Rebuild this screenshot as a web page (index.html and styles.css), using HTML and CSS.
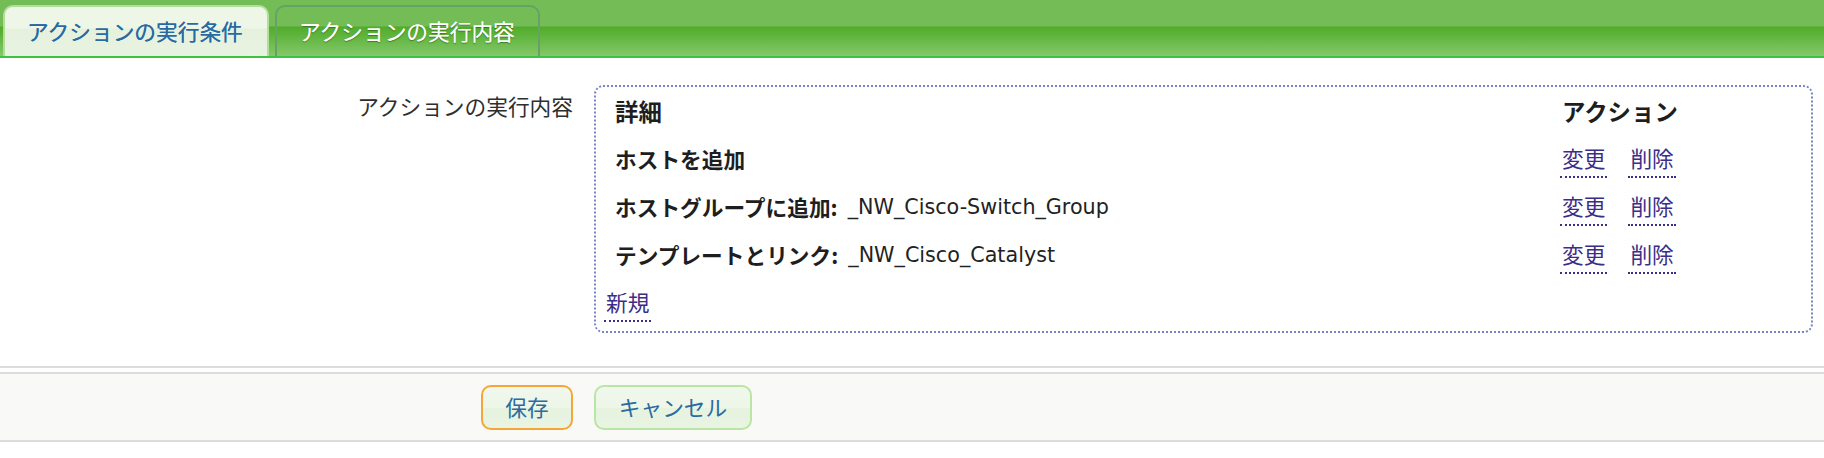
FILE: index.html
```html
<!DOCTYPE html>
<html lang="ja">
<head>
<meta charset="utf-8">
<title>アクション</title>
<link rel="stylesheet" href="styles.css">
</head>
<body>
<div class="tabs-bar">
  <div class="tab tab-active">アクションの実行条件</div>
  <div class="tab tab-inactive">アクションの実行内容</div>
</div>

<div class="form-row">
  <div class="label">アクションの実行内容</div>
  <div class="box">
    <div class="ops">
      <div class="cell detail head">詳細</div>
      <div class="cell act head">アクション</div>

      <div class="cell detail"><b>ホストを追加</b></div>
      <div class="cell act"><a class="link">変更</a><a class="link">削除</a></div>

      <div class="cell detail"><b>ホストグループに追加:</b><span class="name">_NW_Cisco-Switch_Group</span></div>
      <div class="cell act"><a class="link">変更</a><a class="link">削除</a></div>

      <div class="cell detail"><b>テンプレートとリンク:</b><span class="name">_NW_Cisco_Catalyst</span></div>
      <div class="cell act"><a class="link">変更</a><a class="link">削除</a></div>
    </div>
    <div class="new-row"><a class="link">新規</a></div>
  </div>
</div>

<div class="footer">
  <div class="footer-inner">
    <div class="btn-cell-left"><button class="btn btn-save">保存</button></div>
    <div class="btn-cell-right"><button class="btn btn-cancel">キャンセル</button></div>
  </div>
</div>
</body>
</html>
```

FILE: styles.css
```css
* { box-sizing: border-box; }

body {
  margin: 0;
  background: #ffffff;
  font-family: "DejaVu Sans", "Noto Sans CJK JP", sans-serif;
  font-size: 21.7px;
  line-height: 22px;
  color: #222222;
}

/* ---------- tabs ---------- */
.tabs-bar {
  height: 58px;
  display: flex;
  align-items: flex-end;
  gap: 6px;
  padding: 5px 0 0 3px;
  background: linear-gradient(to bottom,
    #74bc56 0, #74bc56 26px,
    #50ac2a 27px, #84c86a 56px);
  border-bottom: 2px solid #40c040;
}

.tab {
  height: 51px;
  display: flex;
  align-items: center;
  padding: 0 22px 2px 22px;
  border: 2px solid transparent;
  border-bottom: none;
  border-radius: 10px 10px 0 0;
  font-family: "Noto Sans CJK JP", sans-serif;
}

.tab-active {
  width: 266px;
  color: #2a6aa4;
  border-color: #b2de9a;
  background: linear-gradient(to bottom,
    #eef6e8 0, #eef6e8 21px,
    #e5f1dd 22px, #e8f3e1 100%);
  text-shadow: 0 0 0.4px #2a6aa4;
}

.tab-inactive {
  width: 265px;
  color: #ffffff;
  border-color: #66a266;
  text-shadow: 0 1px 1px rgba(30, 70, 10, 0.55), 0 0 0.5px #ffffff;
}

/* ---------- form ---------- */
.form-row {
  display: grid;
  grid-template-columns: 573px 1fr;
  column-gap: 21px;
  padding-right: 11px;
  margin-top: 27px;
}

.label {
  text-align: right;
  padding-top: 10px;
  color: #2e2e2e;
  font-family: "Noto Sans CJK JP", sans-serif;
}

.box {
  border: 2px dotted #7484c4;
  border-radius: 9px;
  padding: 0 0 4px 0;
}

.ops {
  display: grid;
  grid-template-columns: 1fr 251px;
  padding-left: 19px;
}

.cell {
  height: 48px;
  display: flex;
  align-items: center;
  white-space: nowrap;
}

.cell b, .head {
  font-weight: bold;
  color: #1e1e1e;
  font-family: "Noto Sans CJK JP", sans-serif;
}

.head { font-size: 23.4px; }

.cell b { margin-right: 10px; }

.name {
  font-family: "DejaVu Sans", sans-serif;
  font-size: 20.7px;
  color: #222222;
}

.act { gap: 21px; }
.act.head { padding-left: 2px; }

.link {
  display: inline-block;
  padding: 7px 2px;
  color: #3c2e88;
  border-bottom: 2px dotted #3c2e88;
  text-decoration: none;
  font-family: "Noto Sans CJK JP", sans-serif;
}

.new-row {
  height: 48px;
  display: flex;
  align-items: center;
  padding-left: 8px;
}

/* ---------- footer ---------- */
.footer {
  margin-top: 33px;
  border-top: 2px solid #dcdcdc;
  padding-top: 4px;
}

.footer-inner {
  height: 70px;
  display: grid;
  grid-template-columns: 573px 1fr;
  column-gap: 21px;
  align-items: center;
  background: #f9f9f7;
  border-top: 2px solid #dcdcdc;
  border-bottom: 2px solid #dcdcdc;
}

.btn-cell-left { justify-self: end; }

.btn {
  height: 45px;
  padding: 0;
  border-radius: 10px;
  border: 2px solid #b9e5a5;
  background: linear-gradient(to bottom,
    #f0f7ec 0, #eef6e9 50%, #e6f3df 52%, #e9f4e3 100%);
  color: #2c6aa0;
  font-family: "Noto Sans CJK JP", sans-serif;
  font-size: 21.7px;
  line-height: 22px;
}

.btn-save {
  width: 92px;
  border-color: #f6a636;
}

.btn-cancel {
  width: 158px;
}
```
